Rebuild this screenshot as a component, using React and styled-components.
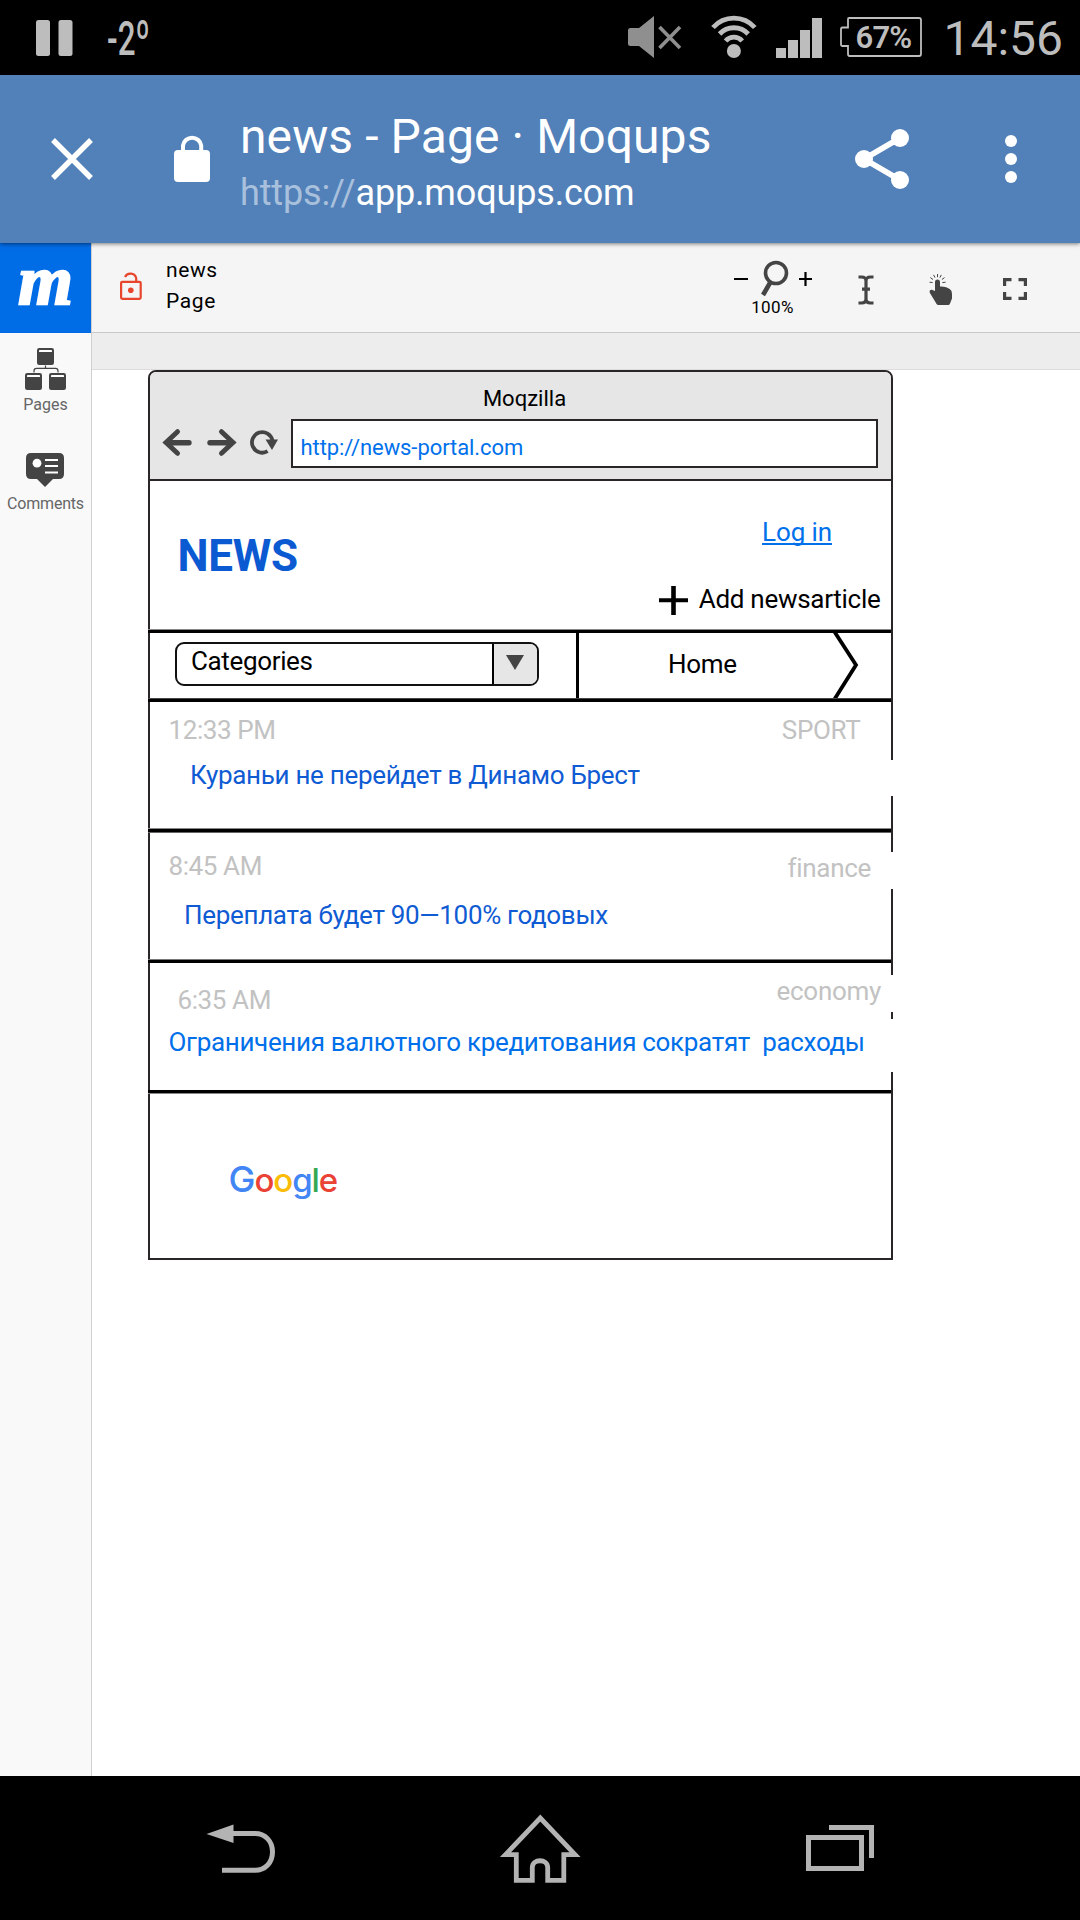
import React from 'react';
import styled, { createGlobalStyle } from 'styled-components';

const GlobalStyle = createGlobalStyle`
  * { box-sizing: border-box; }
  body { margin: 0; background: #fff; font-family: Roboto, 'Noto Sans', sans-serif; color: #000; }
  svg { display: block; flex: none; overflow: visible; }
`;

const Phone = styled.div`
  width: 1080px;
  height: 1920px;
  display: flex;
  flex-direction: column;
  overflow: hidden;
`;

/* ---------- status bar ---------- */
const StatusBar = styled.header`
  height: 75px;
  flex: none;
  background: #000;
  color: #bdbdbd;
  display: flex;
  align-items: flex-start;
  padding: 0 17px 0 36px;
`;
const StatusIcon = styled.div`
  margin: ${p => p.$top}px ${p => p.$right}px 0 0;
`;
const Temperature = styled.div`
  width: 42px;
  margin: 10px auto 0 20px;
  padding-left: 14px;
  font-size: 49px;
  line-height: 57px;
  font-weight: 500;
  white-space: nowrap;
  transform: scaleX(0.64);
  transform-origin: 14px 0;
`;
const Battery = styled.div`
  position: relative;
  width: 82px;
  height: 41px;
  margin: 17px 21px 0 0;
  padding-left: 15px;
  > svg { position: absolute; left: 0; top: 0; }
`;
const BatteryLevel = styled.span`
  display: block;
  font-size: 31px;
  line-height: 41px;
  font-weight: 600;
  letter-spacing: -0.8px;
`;
const Clock = styled.div`
  margin-top: 10px;
  font-size: 48px;
  line-height: 57px;
`;

/* ---------- browser app bar ---------- */
const AppBar = styled.div`
  position: relative;
  height: 168px;
  flex: none;
  background: #5280b9;
  box-shadow: 0 1px 4px rgba(0, 0, 0, 0.5);
  display: flex;
  align-items: center;
  padding: 0 63px 0 51px;
  color: #fff;
  > svg { margin-top: -1px; }
`;
const LockSlot = styled.div`
  margin: -3px 0 0 81px;
`;
const PageInfo = styled.div`
  margin: 4px auto 0 30px;
  white-space: nowrap;
`;
const PageTitle = styled.div`
  font-size: 48px;
  line-height: 58px;
  letter-spacing: 0.1px;
`;
const PageUrl = styled.div`
  font-size: 36px;
  line-height: 44px;
  letter-spacing: -0.15px;
  margin-top: 5px;
`;
const Scheme = styled.span`
  color: #a9c0dd;
`;
const MenuSlot = styled.div`
  margin: 0 0 0 96px;
`;

/* ---------- editor ---------- */
const Editor = styled.div`
  flex: 1;
  display: flex;
  min-height: 0;
`;
const Sidebar = styled.nav`
  width: 92px;
  flex: none;
  background: #f9f9f9;
  border-right: 1px solid #cfcfcf;
  display: flex;
  flex-direction: column;
  align-items: center;
`;
const Logo = styled.div`
  width: 91px;
  height: 90px;
  background: #006ce6;
  color: #fff;
  font: italic 700 70px/76px 'Liberation Serif', serif;
  text-align: center;
  -webkit-text-stroke: 2.4px #fff;
`;
const SideItem = styled.div`
  display: flex;
  flex-direction: column;
  align-items: center;
  margin-top: ${p => p.$top}px;
`;
const SideLabel = styled.span`
  margin-top: ${p => p.$gap}px;
  font-size: 16px;
  line-height: 20px;
  letter-spacing: ${p => p.$track || 0}px;
  color: #666;
`;
const Main = styled.main`
  flex: 1;
  display: flex;
  flex-direction: column;
  align-items: stretch;
`;
const Toolbar = styled.div`
  height: 90px;
  flex: none;
  background: #f5f5f5;
  border-bottom: 1px solid #c9c9c9;
  display: flex;
  align-items: flex-start;
  padding: 0 53px 0 28px;
`;
const ToolSlot = styled.div`
  margin: ${p => p.$top}px 0 0 ${p => p.$left || 0}px;
`;
const DocNames = styled.div`
  margin: 12px auto 0 24px;
  font-size: 21px;
  line-height: 31px;
  letter-spacing: 0.6px;
`;
const ZoomGroup = styled.div`
  width: 78px;
  margin-top: 17px;
  text-align: center;
`;
const ZoomRow = styled.div`
  display: flex;
  align-items: center;
  justify-content: space-between;
  height: 37px;
`;
const ZoomLevel = styled.div`
  font-size: 17px;
  line-height: 20px;
  letter-spacing: 0.4px;
  padding-right: 1px;
`;
const RulerBand = styled.div`
  height: 37px;
  flex: none;
  background: #ededed;
  border-bottom: 1px solid #dcdcdc;
`;

/* ---------- mocked browser window ---------- */
const Frame = styled.section`
  width: 745px;
  height: 890px;
  margin-left: 56px;
  border: 2px solid #2a2627;
  border-radius: 8px 8px 0 0;
  background: #fff;
  display: flex;
  flex-direction: column;
`;
const FrameHeader = styled.div`
  height: 109px;
  flex: none;
  background: #e6e6e6;
  border-bottom: 2px solid #2a2627;
  border-radius: 6px 6px 0 0;
  padding: 14px 13px 0;
`;
const FrameTitle = styled.div`
  font-size: 22px;
  line-height: 26px;
  padding-left: 8px;
  text-align: center;
`;
const AddressRow = styled.div`
  display: flex;
  align-items: center;
  margin-top: 7px;
`;
const AddressIcons = styled.div`
  display: flex;
  align-items: center;
  justify-content: space-between;
  width: 115px;
  margin-top: -2px;
`;
const Address = styled.div`
  width: 587px;
  height: 49px;
  margin-left: 13px;
  padding: 14px 0 0 7.5px;
  border: 2px solid #2a2627;
  background: #fff;
  color: #0071eb;
  font-size: 22px;
  line-height: 26px;
  letter-spacing: -0.07px;
`;
const Hero = styled.div`
  height: 148px;
  flex: none;
  display: flex;
  justify-content: space-between;
`;
const Brand = styled.h1`
  margin: 50px 0 0 27.5px;
  font-size: 44px;
  line-height: 50px;
  font-weight: 700;
  letter-spacing: -0.3px;
  color: #0c5ad2;
`;
const HeroActions = styled.div`
  display: flex;
  flex-direction: column;
  align-items: flex-end;
  font-size: 26px;
  line-height: 30px;
`;
const LogIn = styled.a`
  margin: 36px 59px 0 0;
  color: #0071eb;
  letter-spacing: -0.1px;
  text-decoration: underline;
  text-decoration-thickness: 1.5px;
  text-underline-offset: 2px;
  text-decoration-skip-ink: none;
`;
const AddArticle = styled.div`
  display: flex;
  align-items: center;
  gap: 11px;
  margin: 36px 10.5px 0 0;
  letter-spacing: -0.28px;
  > svg { margin-top: 3px; }
`;
const Rule = styled.div`
  flex: none;
  margin-left: -2px;
  height: ${p => 3 + (p.$over ? 1 : 0) + (p.$under ? 1 : 0)}px;
  background: #000;
  border-top: ${p => (p.$over ? `1px solid ${p.$over}` : 'none')};
  border-bottom: ${p => (p.$under ? `1px solid ${p.$under}` : 'none')};
`;
const NavRow = styled.div`
  height: 65px;
  flex: none;
  display: flex;
  align-items: flex-start;
  font-size: 26px;
  line-height: 30px;
  letter-spacing: -0.35px;
`;
const Select = styled.div`
  display: flex;
  width: 364px;
  height: 44px;
  margin: 9px 37px 0 25px;
  border: 2px solid #111;
  border-radius: 9px;
  overflow: hidden;
`;
const SelectValue = styled.span`
  flex: 1;
  padding: 2px 0 0 14px;
`;
const SelectArrow = styled.span`
  width: 45px;
  border-left: 2px solid #000;
  background: #e6e6e6;
  padding: 11px 0 0 12px;
`;
const Tab = styled.div`
  display: flex;
  height: 65px;
  border-left: 3px solid #000;
`;
const TabLabel = styled.span`
  width: 251px;
  padding: 16px 0 0 89px;
`;
const Item = styled.article`
  flex: none;
  height: ${p => p.$height}px;
  font-size: 26px;
  line-height: 30px;
  letter-spacing: -0.3px;
`;
const Meta = styled.div`
  display: flex;
  align-items: flex-start;
  justify-content: space-between;
  height: ${p => p.$height}px;
  color: #c2c2c2;
`;
const Time = styled.time`
  margin: ${p => p.$top}px 0 0 ${p => p.$left}px;
  letter-spacing: -0.4px;
`;
const Category = styled.span`
  height: 37px;
  margin: ${p => p.$top}px -2px 0 0;
  padding: ${p => p.$pad}px ${p => p.$right}px 0 0;
  background: ${p => (p.$covers ? '#fff' : 'transparent')};
`;
const Headline = styled.a`
  display: block;
  height: ${p => p.$height || 36}px;
  margin-right: -2px;
  padding: ${p => p.$pad || 0}px 0 0 ${p => p.$left}px;
  background: ${p => (p.$covers ? '#fff' : 'transparent')};
  color: ${p => p.$color || '#0f5bd3'};
  letter-spacing: ${p => p.$track || -0.3}px;
  white-space: pre;
`;
const FrameFooter = styled.footer`
  padding: 63px 0 0 78.5px;
`;
const GoogleMark = styled.div`
  font: 500 33px/44px Inter, sans-serif;
  letter-spacing: -1.05px;
`;
const Letter = styled.span`
  color: ${p => p.$color};
  font-size: ${p => p.$size || 33}px;
`;

/* ---------- system navigation ---------- */
const SystemNav = styled.div`
  height: 144px;
  flex: none;
  background: #000;
  display: flex;
  align-items: center;
  padding-left: 206px;
  gap: 226px;
`;

const INK = '#444';

const PageTile = ({ x, y }) => (
  <g>
    <rect x={x} y={y} width="17" height="17" rx="2.2" fill={INK} />
    <rect x={x + 2} y={y + 2} width="13" height="2" rx="0.6" fill="#fff" />
  </g>
);

const items = [
  { height: 126, metaHeight: 58, time: '12:33 PM', timeTop: 13, timeLeft: 18.5, cat: 'SPORT', catTop: 13, catPad: 0, catRight: 32.5, title: 'Кураньи не перейдет в Динамо Брест', left: 40, titleCovers: true, over: '#888', under: '#666' },
  { height: 126, metaHeight: 67, time: '8:45 AM', timeTop: 18, timeLeft: 18.5, cat: 'finance', catTop: 19, catPad: 1, catRight: 22, catCovers: true, title: 'Переплата будет 90—100% годовых', left: 34, track: -0.32, over: '#777' },
  { height: 127, metaHeight: 56, time: '6:35 AM', timeTop: 22, timeLeft: 27.5, cat: 'economy', catTop: 12, catPad: 1, catRight: 12, catCovers: true, title: 'Ограничения валютного кредитования сократят  расходы', left: 18.5, track: -0.33, titleCovers: true, titleHeight: 53, titlePad: 8, color: '#0070ea', under: '#888' },
];

export default function App() {
  return (
    <Phone>
      <GlobalStyle />
      <StatusBar>
        <StatusIcon $top={20} $right={0}>
          <svg width="37" height="36" fill="#bdbdbd"><rect width="14" height="36" rx="2.5" /><rect x="22.5" width="14" height="36" rx="2.5" /></svg>
        </StatusIcon>
        <Temperature>-2º</Temperature>
        <StatusIcon $top={16} $right={30}>
          <svg width="53" height="42" fill="none" stroke="#8f8f8f" strokeWidth="3.6">
            <path d="M2.5 12H11L26 0V42L11 30H2.5Q0 30 0 27.5V14.5Q0 12 2.5 12Z" fill="#8f8f8f" stroke="none" />
            <path d="M31.5 11L52 32M52 11L31.5 32" />
          </svg>
        </StatusIcon>
        <StatusIcon $top={16} $right={20}>
          <svg width="45" height="42" fill="none" stroke="#bdbdbd" strokeWidth="4.8">
            <path d="M2 11.5A28 28 0 0 1 43.8 11.5M8.6 18A19.5 19.5 0 0 1 37.2 18M14.6 25A11 11 0 0 1 31.2 25" />
            <circle cx="22.9" cy="35" r="7" fill="#bdbdbd" stroke="none" />
          </svg>
        </StatusIcon>
        <StatusIcon $top={18} $right={18}>
          <svg width="46" height="40" fill="#bdbdbd"><path d="M0 30h10v10H0zM12 22h10v18H12zM24 12h10v28H24zM36 0h10v40H36z" /></svg>
        </StatusIcon>
        <Battery>
          <svg width="82" height="41" fill="none" stroke="#bdbdbd" strokeWidth="1.8"><path d="M9 1H79Q81 1 81 3V37Q81 39 79 39H9.5Q8 39 8 37V29H2.5Q1 29 1 27.5V12Q1 10.5 2.5 10.5H8V2Q8 1 9 1Z" /></svg>
          <BatteryLevel>67%</BatteryLevel>
        </Battery>
        <Clock>14:56</Clock>
      </StatusBar>

      <AppBar>
        <svg width="42" height="42" stroke="#fff" strokeWidth="5.4"><path d="M2 2L40 40M40 2L2 40" /></svg>
        <LockSlot>
          <svg width="36" height="48"><rect y="16" width="36" height="32" rx="4" fill="#fff" /><path d="M9 18V11.5A9.2 9.2 0 0 1 27.2 11.5V18" fill="none" stroke="#fff" strokeWidth="4" /></svg>
        </LockSlot>
        <PageInfo>
          <PageTitle>news - Page · Moqups</PageTitle>
          <PageUrl><Scheme>https://</Scheme>app.moqups.com</PageUrl>
        </PageInfo>
        <svg width="54" height="60" fill="#fff"><path d="M45 9L9 30L45 51" fill="none" stroke="#fff" strokeWidth="5.6" /><circle cx="45" cy="9" r="9" /><circle cx="9" cy="30" r="9" /><circle cx="45" cy="51" r="9" /></svg>
        <MenuSlot>
          <svg width="12" height="48" fill="#fff"><circle cx="6" cy="6" r="6" /><circle cx="6" cy="24" r="6" /><circle cx="6" cy="42" r="6" /></svg>
        </MenuSlot>
      </AppBar>

      <Editor>
        <Sidebar>
          <Logo>m</Logo>
          <SideItem $top={15}>
            <svg width="41" height="42">
              <PageTile x={12} y={0} /><PageTile x={0} y={25} /><PageTile x={24} y={25} />
              <path d="M20.5 17.5V20.3M9 24.5V23Q9 20.3 11.5 20.3H30.5Q33 20.3 33 23V24.5" fill="none" stroke={INK} strokeWidth="1.2" />
            </svg>
            <SideLabel $gap={5}>Pages</SideLabel>
          </SideItem>
          <SideItem $top={38}>
            <svg width="38" height="34">
              <path d="M5 0H33Q38 0 38 5V21Q38 26 33 26H27L19 34L11 26H5Q0 26 0 21V5Q0 0 5 0Z" fill={INK} />
              <circle cx="11" cy="10.2" r="4.4" fill="#fff" />
              <path d="M19 7H32M19 13H32M19 19.5H32" stroke="#fff" strokeWidth="2" />
            </svg>
            <SideLabel $gap={7} $track={-0.2}>Comments</SideLabel>
          </SideItem>
        </Sidebar>

        <Main>
          <Toolbar>
            <ToolSlot $top={28}>
              <svg width="22" height="30" fill="none" stroke="#e8462c" strokeWidth="2.2">
                <rect x="1.1" y="10.8" width="19.6" height="17" rx="1.2" />
                <path d="M5 6A6 6 0 0 1 16.2 7V10.5" />
                <circle cx="10.8" cy="19.3" r="2.8" fill="#e8462c" stroke="none" />
              </svg>
            </ToolSlot>
            <DocNames>
              <div>news</div>
              <div>Page</div>
            </DocNames>
            <ZoomGroup>
              <ZoomRow>
                <svg width="14" height="2"><rect width="14" height="2" /></svg>
                <svg width="29" height="37" fill="none" stroke={INK}>
                  <circle cx="17" cy="13" r="10.5" strokeWidth="3.6" />
                  <path d="M11.5 22L4 35" strokeWidth="4.6" />
                </svg>
                <svg width="13" height="14"><path d="M5.4 0h2.2v5.9H13v2.2H7.6V14H5.4V8.1H0V5.9h5.4z" /></svg>
              </ZoomRow>
              <ZoomLevel>100%</ZoomLevel>
            </ZoomGroup>
            <ToolSlot $top={32} $left={46}>
              <svg width="16" height="30" fill="none" stroke={INK} strokeWidth="3.2">
                <path d="M0.5 2H3.5Q8 2 8 6V24Q8 28 3.5 28H0.5M15.5 2H12.5Q8 2 8 6V24Q8 28 12.5 28H15.5M4 14.2H12" />
              </svg>
            </ToolSlot>
            <ToolSlot $top={31} $left={55}>
              <svg width="24" height="31">
                <path d="M6 8C6 4.7 11 4.7 11 8V12.5C15 12.2 19 13.6 21 15.2Q23 16.4 23 20V24.5L20.8 30Q20.3 31 19.3 31H9.3Q8.2 31 7.6 30L0.8 18.8C0 16.8 1.5 15.4 3.5 16L6 17Z" fill={INK} />
                <path d="M3.6 8.6L0.6 8.2M4 5.5L1.4 3.6M6 3.6L4.6 0.9M8.5 3.2L8.6 0M10.9 3.6L12.3 0.9M12.9 5.5L15.5 3.6M13.4 8.6L16.6 8.2" stroke={INK} strokeWidth="1" fill="none" />
              </svg>
            </ToolSlot>
            <ToolSlot $top={35} $left={50}>
              <svg width="24" height="22" fill="none" stroke={INK} strokeWidth="3.2"><path d="M1.6 8V1.6H8.5M15.5 1.6H22.4V8M22.4 14V20.4H15.5M8.5 20.4H1.6V14" /></svg>
            </ToolSlot>
          </Toolbar>
          <RulerBand />

          <Frame>
            <FrameHeader>
              <FrameTitle>Moqzilla</FrameTitle>
              <AddressRow>
                <AddressIcons>
                  <svg width="29" height="27" fill="none" stroke={INK} strokeLinecap="round">
                    <path d="M14.5 2.7L3 13.5L14.5 24.3" strokeWidth="5" /><path d="M6 13.8H26" strokeWidth="5.4" />
                  </svg>
                  <svg width="29" height="27" fill="none" stroke={INK} strokeLinecap="round">
                    <path d="M14.5 2.7L26 13.5L14.5 24.3" strokeWidth="5" /><path d="M3 13.8H23" strokeWidth="5.4" />
                  </svg>
                  <svg width="28" height="25" fill="none" stroke={INK}>
                    <path d="M22.4 10.5A10.3 10.3 0 1 0 17.6 21.2" strokeWidth="3.8" />
                    <path d="M15.5 9.5H28L22 20Z" fill={INK} stroke="none" />
                  </svg>
                </AddressIcons>
                <Address>http://news-portal.com</Address>
              </AddressRow>
            </FrameHeader>

            <Hero>
              <Brand>NEWS</Brand>
              <HeroActions>
                <LogIn>Log in</LogIn>
                <AddArticle>
                  <svg width="29" height="29"><path d="M12.2 0h4.6v12.2H29v4.1H16.8V29h-4.6V16.3H0v-4.1h12.2z" /></svg>
                  Add newsarticle
                </AddArticle>
              </HeroActions>
            </Hero>
            <Rule $over="#888" />

            <NavRow>
              <Select>
                <SelectValue>Categories</SelectValue>
                <SelectArrow><svg width="18" height="15"><path d="M0 0H18L9 15Z" fill={INK} /></svg></SelectArrow>
              </Select>
              <Tab>
                <TabLabel>Home</TabLabel>
                <svg width="30" height="65" fill="none" stroke="#000" strokeWidth="3.8"><path d="M4 -2L26 32L4 67" /></svg>
              </Tab>
            </NavRow>
            <Rule $over="#444" />

            {items.map(item => (
              <React.Fragment key={item.time}>
                <Item $height={item.height}>
                  <Meta $height={item.metaHeight}>
                    <Time $top={item.timeTop} $left={item.timeLeft}>{item.time}</Time>
                    <Category $top={item.catTop} $pad={item.catPad} $right={item.catRight} $covers={item.catCovers}>{item.cat}</Category>
                  </Meta>
                  <Headline $left={item.left} $height={item.titleHeight} $pad={item.titlePad} $covers={item.titleCovers} $color={item.color} $track={item.track}>{item.title}</Headline>
                </Item>
                <Rule $over={item.over} $under={item.under} />
              </React.Fragment>
            ))}

            <FrameFooter>
              <GoogleMark>
                <Letter $color="#4285f4" $size={36}>G</Letter>
                <Letter $color="#ea4335">o</Letter>
                <Letter $color="#fbbc05">o</Letter>
                <Letter $color="#4285f4">g</Letter>
                <Letter $color="#34a853">l</Letter>
                <Letter $color="#ea4335">e</Letter>
              </GoogleMark>
            </FrameFooter>
          </Frame>
        </Main>
      </Editor>

      <SystemNav>
        <svg width="69" height="49"><path d="M0.5 10L27.5 0.5V19Z" fill="#b3b3b3" /><path d="M27 9.5H49C59 9.5 66.5 17 66.5 28S59 46.3 49 46.3H16" fill="none" stroke="#b3b3b3" strokeWidth="5" /></svg>
        <svg width="79" height="69" fill="none" stroke="#b3b3b3" strokeWidth="4.8"><path d="M15.3 40.6H4.5L39.3 4L74 40.6H62.8V66.3H46.7V53.5C46.7 44.5 31.3 44.5 31.3 53.5V66.3H15.3Z" /></svg>
        <svg width="68" height="46" fill="none" stroke="#b3b3b3" strokeWidth="5"><rect x="2.5" y="12.5" width="53" height="31" /><path d="M23 2.5H65.5V33" /></svg>
      </SystemNav>
    </Phone>
  );
}
